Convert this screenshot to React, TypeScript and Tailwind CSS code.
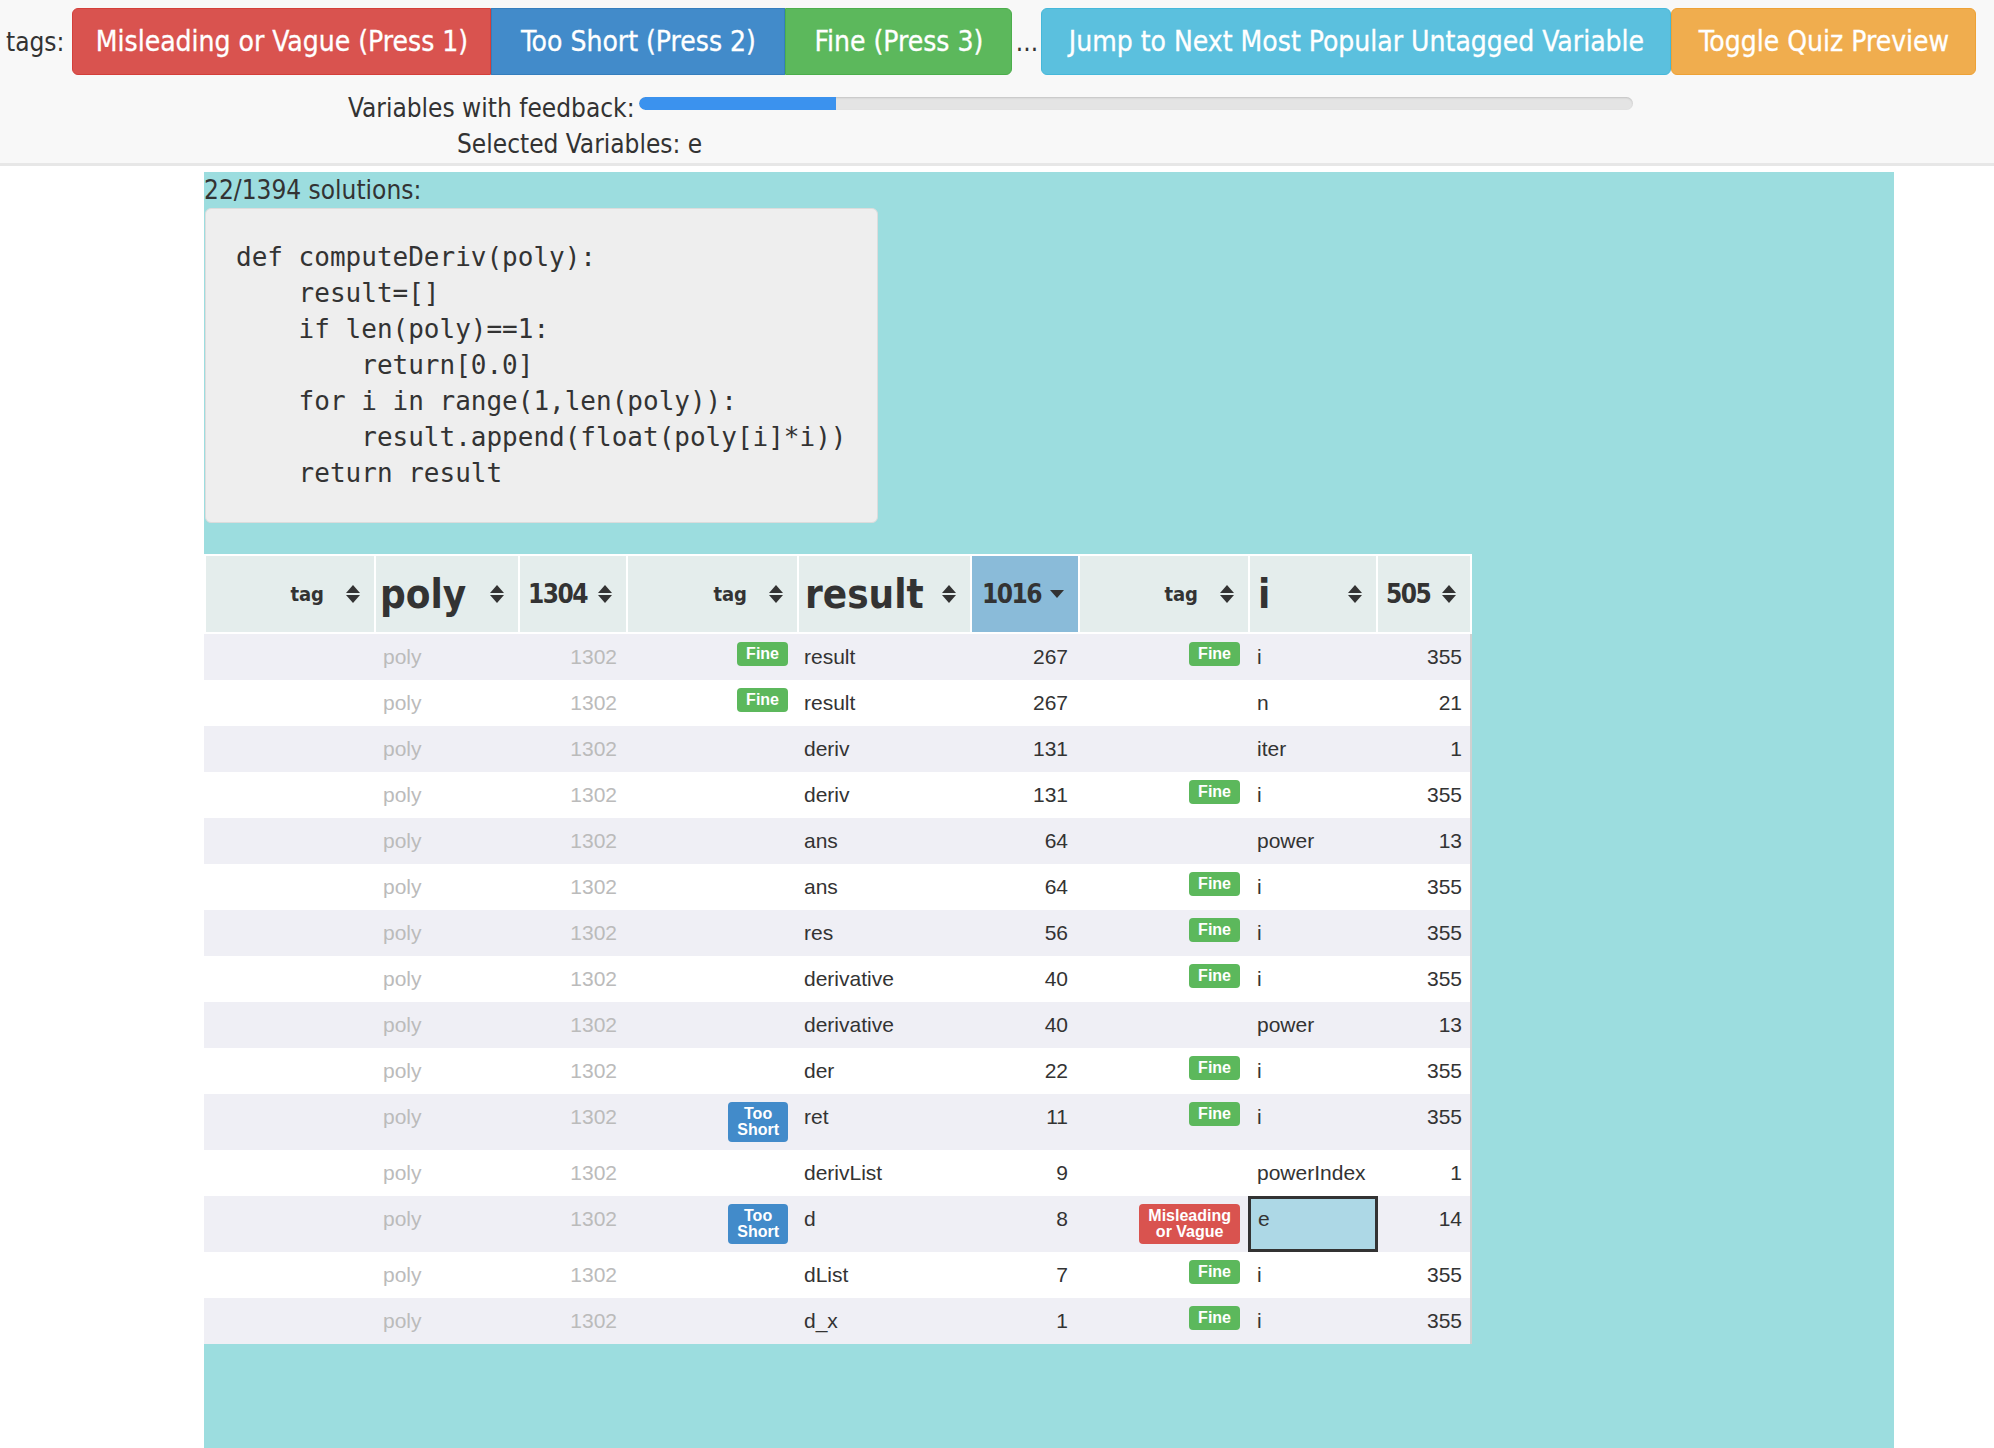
import React from "react";

type Tag = "fine" | "short" | "vague" | null;

type Row = {
  tag1: Tag;
  name1: string;
  count1: number;
  tag2: Tag;
  name2: string;
  count2: number;
  selected?: boolean;
};

const rows: Row[] = [
  { tag1: "fine", name1: "result", count1: 267, tag2: "fine", name2: "i", count2: 355 },
  { tag1: "fine", name1: "result", count1: 267, tag2: null, name2: "n", count2: 21 },
  { tag1: null, name1: "deriv", count1: 131, tag2: null, name2: "iter", count2: 1 },
  { tag1: null, name1: "deriv", count1: 131, tag2: "fine", name2: "i", count2: 355 },
  { tag1: null, name1: "ans", count1: 64, tag2: null, name2: "power", count2: 13 },
  { tag1: null, name1: "ans", count1: 64, tag2: "fine", name2: "i", count2: 355 },
  { tag1: null, name1: "res", count1: 56, tag2: "fine", name2: "i", count2: 355 },
  { tag1: null, name1: "derivative", count1: 40, tag2: "fine", name2: "i", count2: 355 },
  { tag1: null, name1: "derivative", count1: 40, tag2: null, name2: "power", count2: 13 },
  { tag1: null, name1: "der", count1: 22, tag2: "fine", name2: "i", count2: 355 },
  { tag1: "short", name1: "ret", count1: 11, tag2: "fine", name2: "i", count2: 355 },
  { tag1: null, name1: "derivList", count1: 9, tag2: null, name2: "powerIndex", count2: 1 },
  { tag1: "short", name1: "d", count1: 8, tag2: "vague", name2: "e", count2: 14, selected: true },
  { tag1: null, name1: "dList", count1: 7, tag2: "fine", name2: "i", count2: 355 },
  { tag1: null, name1: "d_x", count1: 1, tag2: "fine", name2: "i", count2: 355 },
];

const code = [
  "def computeDeriv(poly):",
  "    result=[]",
  "    if len(poly)==1:",
  "        return[0.0]",
  "    for i in range(1,len(poly)):",
  "        result.append(float(poly[i]*i))",
  "    return result",
];

function SortIcon({ desc }: { desc?: boolean }) {
  if (desc) {
    return (
      <svg width="14" height="8" viewBox="0 0 14 8" className="absolute right-[14px] top-1/2 -translate-y-1/2">
        <path d="M0 0 L14 0 L7 8 Z" fill="#333" />
      </svg>
    );
  }
  return (
    <svg width="14" height="18" viewBox="0 0 14 18" className="absolute right-[14px] top-1/2 -translate-y-1/2">
      <path d="M0 8 L7 0 L14 8 Z" fill="#333" />
      <path d="M0 10 L14 10 L7 18 Z" fill="#333" />
    </svg>
  );
}

function Badge({ kind }: { kind: Tag }) {
  if (!kind) return null;
  const styles = {
    fine: "bg-[#5cb85c]",
    short: "bg-[#428bca]",
    vague: "bg-[#d9534f]",
  };
  return (
    <span
      className={`${styles[kind]} rounded-[4px] px-[9px] py-[4px] text-center text-[16px] leading-[16px] font-bold text-white font-['Liberation_Sans',Arial,sans-serif]`}
    >
      {kind === "fine" && "Fine"}
      {kind === "short" && (
        <>
          Too
          <br />
          Short
        </>
      )}
      {kind === "vague" && (
        <>
          Misleading
          <br />
          or Vague
        </>
      )}
    </span>
  );
}

function TableHeader() {
  return (
    <div className="flex gap-[2px] bg-white p-[2px] text-[#333] font-bold font-['DejaVu_Sans',sans-serif] font-stretch-condensed">
      <div className="relative flex h-[76px] w-[168px] items-center justify-end bg-[#e4edec] pr-[50px] text-[20px] leading-none">
        tag
        <SortIcon />
      </div>
      <div className="relative flex h-[76px] w-[142px] items-center bg-[#e4edec] pl-[4px] text-[40px] leading-none">
        poly
        <SortIcon />
      </div>
      <div className="relative flex h-[76px] w-[106px] items-center bg-[#e4edec] pl-[8px] text-[26px] leading-none tracking-[-1.5px]">
        1304
        <SortIcon />
      </div>
      <div className="relative flex h-[76px] w-[169px] items-center justify-end bg-[#e4edec] pr-[50px] text-[20px] leading-none">
        tag
        <SortIcon />
      </div>
      <div className="relative flex h-[76px] w-[171px] items-center bg-[#e4edec] pl-[6px] text-[40px] leading-none">
        result
        <SortIcon />
      </div>
      <div className="relative flex h-[76px] w-[106px] items-center bg-[#8abbd9] pl-[10px] text-[26px] leading-none tracking-[-1.5px]">
        1016
        <SortIcon desc />
      </div>
      <div className="relative flex h-[76px] w-[168px] items-center justify-end bg-[#e4edec] pr-[50px] text-[20px] leading-none">
        tag
        <SortIcon />
      </div>
      <div className="relative flex h-[76px] w-[126px] items-center bg-[#e4edec] pl-[8px] text-[40px] leading-none">
        i
        <SortIcon />
      </div>
      <div className="relative flex h-[76px] w-[92px] items-center bg-[#e4edec] pl-[8px] text-[26px] leading-none tracking-[-1.5px]">
        505
        <SortIcon />
      </div>
    </div>
  );
}

function TableRow({ row, shaded }: { row: Row; shaded: boolean }) {
  return (
    <div
      className={`flex min-h-[46px] items-stretch gap-[2px] pl-[2px] text-[21px] leading-[30px] text-[#333] ${
        shaded ? "bg-[#efeff5]" : "bg-white"
      }`}
    >
      <div className="w-[168px]" />
      <div className="w-[142px] py-[8px] pl-[7px] text-[#bbb]">poly</div>
      <div className="w-[106px] py-[8px] pr-[9px] text-right text-[#bbb]">1302</div>
      <div className="flex w-[169px] items-start justify-end py-[8px] pr-[9px]">
        <Badge kind={row.tag1} />
      </div>
      <div className="w-[171px] py-[8px] pl-[5px]">{row.name1}</div>
      <div className="w-[106px] py-[8px] pr-[10px] text-right">{row.count1}</div>
      <div className="flex w-[168px] items-start justify-end py-[8px] pr-[8px]">
        <Badge kind={row.tag2} />
      </div>
      {row.selected ? (
        <div className="mx-[-2px] w-[130px] border-[3px] border-[#333] bg-[#add8e6] pb-[5px] pl-[7px] pt-[5px]">
          {row.name2}
        </div>
      ) : (
        <div className="w-[126px] py-[8px] pl-[7px]">{row.name2}</div>
      )}
      <div className="w-[92px] py-[8px] pr-[8px] text-right">{row.count2}</div>
    </div>
  );
}

export default function App() {
  return (
    <div className="min-h-screen bg-white text-[#333] font-['DejaVu_Sans',sans-serif]">
      <header className="h-[166px] border-b-[3px] border-[#e7e7e7] bg-[#f8f8f8] font-stretch-condensed">
        <div className="flex items-baseline pl-[6px] pt-[8px] text-[26px]">
          <span className="mr-[8px]">tags:</span>
          <div className="flex text-[28px] text-white [-webkit-text-stroke:0.3px_white]">
            <button className="flex h-[67px] w-[419px] items-center justify-center rounded-l-[6px] border border-[#d43f3a] bg-[#d9534f]">
              Misleading or Vague (Press 1)
            </button>
            <button className="flex h-[67px] w-[294px] items-center justify-center border border-[#357ebd] bg-[#428bca]">
              Too Short (Press 2)
            </button>
            <button className="flex h-[67px] w-[227px] items-center justify-center rounded-r-[6px] border border-[#4cae4c] bg-[#5cb85c]">
              Fine (Press 3)
            </button>
          </div>
          <span className="w-[29px] text-center">...</span>
          <button className="flex h-[67px] w-[630px] items-center justify-center rounded-[6px] border border-[#46b8da] bg-[#5bc0de] text-[28px] text-white [-webkit-text-stroke:0.3px_white]">
            Jump to Next Most Popular Untagged Variable
          </button>
          <button className="flex h-[67px] w-[305px] items-center justify-center rounded-[6px] border border-[#eea236] bg-[#f0ad4e] text-[28px] text-white [-webkit-text-stroke:0.3px_white]">
            Toggle Quiz Preview
          </button>
        </div>
        <div className="mt-[15px] flex items-start pl-[348px] text-[26px] leading-[36px]">
          <span>Variables with feedback:</span>
          <div className="ml-[4px] mt-[7px] h-[13px] w-[994px] overflow-hidden rounded-full bg-[#e4e4e4] shadow-[inset_0_1px_2px_rgba(0,0,0,0.15)]">
            <div className="h-full w-[197px] rounded-l-full bg-[#3b92ee]" />
          </div>
        </div>
        <div className="pl-[457px] text-[26px] leading-[36px]">Selected Variables: e</div>
      </header>

      <main className="ml-[204px] mt-[6px] min-h-[1276px] w-[1690px] bg-[#9cdddf]">
        <div className="text-[26px] leading-[36px] font-stretch-condensed">22/1394 solutions:</div>
        <pre className="ml-[1px] w-[673px] rounded-[6px] border border-[#dcdcdc] bg-[#eeeeee] pb-[31px] pl-[30px] pt-[30px] text-[26px] leading-[36px] text-[#333] font-['DejaVu_Sans_Mono',monospace]">
          {code.join("\n")}
        </pre>

        <div className="mt-[31px] w-[1268px]">
          <TableHeader />
          <div className="w-[1268px] border-r-2 border-[#d0d0d0] font-['Liberation_Sans',Arial,sans-serif]">
            {rows.map((row, i) => (
              <TableRow key={i} row={row} shaded={i % 2 === 0} />
            ))}
          </div>
        </div>
      </main>
    </div>
  );
}
